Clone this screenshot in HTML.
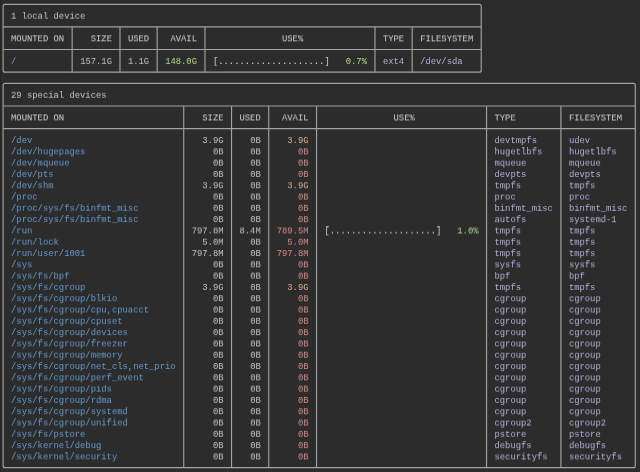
<!DOCTYPE html>
<html><head><meta charset="utf-8"><style>
html,body{margin:0;padding:0;width:640px;height:472px;overflow:hidden;background:#2c2c2c;}
body{position:relative;}
#w{position:absolute;left:0;top:0;width:640px;height:472px;will-change:transform;}
#e{position:absolute;left:0;top:0;width:1px;height:472px;background:#242424;}
svg{position:absolute;left:0;top:0;}
.r{position:absolute;left:0;width:640px;height:11px;will-change:transform;font-family:"Liberation Mono",monospace;font-size:8.853px;line-height:11px;}
.r span{position:absolute;top:0;white-space:pre;}
</style></head><body>
<div id="w"><div id="e"></div><svg width="640" height="472" fill="none" stroke="#a2a2a2" stroke-width="1.15"><path d="M5.096 4.350H479.230Q481.230 4.350 481.230 6.350V70.146Q481.230 72.146 479.230 72.146H5.096Q3.096 72.146 3.096 70.146V6.350Q3.096 4.350 5.096 4.350Z"/><line x1="3.096" y1="26.949" x2="481.230" y2="26.949"/><line x1="3.096" y1="49.548" x2="481.230" y2="49.548"/><line x1="72.160" y1="26.949" x2="72.160" y2="72.146"/><line x1="119.973" y1="26.949" x2="119.973" y2="72.146"/><line x1="157.162" y1="26.949" x2="157.162" y2="72.146"/><line x1="204.975" y1="26.949" x2="204.975" y2="72.146"/><line x1="374.978" y1="26.949" x2="374.978" y2="72.146"/><line x1="412.166" y1="26.949" x2="412.166" y2="72.146"/><path d="M5.096 83.446H633.296Q635.296 83.446 635.296 85.446V465.625Q635.296 467.625 633.296 467.625H5.096Q3.096 467.625 3.096 465.625V85.446Q3.096 83.446 5.096 83.446Z"/><line x1="3.096" y1="106.045" x2="635.296" y2="106.045"/><line x1="3.096" y1="128.643" x2="635.296" y2="128.643"/><line x1="183.725" y1="106.045" x2="183.725" y2="467.625"/><line x1="231.538" y1="106.045" x2="231.538" y2="467.625"/><line x1="268.726" y1="106.045" x2="268.726" y2="467.625"/><line x1="316.540" y1="106.045" x2="316.540" y2="467.625"/><line x1="486.543" y1="106.045" x2="486.543" y2="467.625"/><line x1="560.919" y1="106.045" x2="560.919" y2="467.625"/></svg>
<div class="r" style="top:11px;transform:translateY(0.759px) rotate(0.01deg)"><span style="left:11.065px;color:#c4c4c4">1 local device</span></div>
<div class="r" style="top:34px;transform:translateY(0.358px) rotate(0.01deg)"><span style="left:11.065px;color:#cfcfcf">MOUNTED ON</span><span style="left:90.754px;color:#cfcfcf">SIZE</span><span style="left:127.942px;color:#cfcfcf">USED</span><span style="left:170.443px;color:#cfcfcf">AVAIL</span><span style="left:282.008px;color:#cfcfcf">USE%</span><span style="left:382.947px;color:#cfcfcf">TYPE</span><span style="left:420.135px;color:#cfcfcf">FILESYSTEM</span></div>
<div class="r" style="top:56px;transform:translateY(0.957px) rotate(0.01deg)"><span style="left:11.065px;color:#6497cc">/</span><span style="left:80.129px;color:#c0c0c0">157.1G</span><span style="left:127.942px;color:#c0c0c0">1.1G</span><span style="left:165.131px;color:#afd787">148.0G</span><span style="left:212.944px;color:#c8cec0">[</span><span style="left:218.257px;color:#c8cec0;font-weight:bold">....................</span><span style="left:324.509px;color:#c8cec0">]</span><span style="left:345.759px;color:#afd787">0.7%</span><span style="left:382.947px;color:#afafd7">ext4</span><span style="left:420.135px;color:#afafd7">/dev/sda</span></div>
<div class="r" style="top:90px;transform:translateY(0.855px) rotate(0.01deg)"><span style="left:11.065px;color:#c4c4c4">29 special devices</span></div>
<div class="r" style="top:113px;transform:translateY(0.454px) rotate(0.01deg)"><span style="left:11.065px;color:#cfcfcf">MOUNTED ON</span><span style="left:202.319px;color:#cfcfcf">SIZE</span><span style="left:239.507px;color:#cfcfcf">USED</span><span style="left:282.008px;color:#cfcfcf">AVAIL</span><span style="left:393.572px;color:#cfcfcf">USE%</span><span style="left:494.512px;color:#cfcfcf">TYPE</span><span style="left:568.888px;color:#cfcfcf">FILESYSTEM</span></div>
<div class="r" style="top:136px;transform:translateY(0.053px) rotate(0.01deg)"><span style="left:11.065px;color:#6497cc">/dev</span><span style="left:202.319px;color:#c0c0c0">3.9G</span><span style="left:250.132px;color:#c0c0c0">0B</span><span style="left:287.320px;color:#d7af87">3.9G</span><span style="left:494.512px;color:#afafd7">devtmpfs</span><span style="left:568.888px;color:#afafd7">udev</span></div>
<div class="r" style="top:147px;transform:translateY(0.352px) rotate(0.01deg)"><span style="left:11.065px;color:#6497cc">/dev/hugepages</span><span style="left:212.944px;color:#c0c0c0">0B</span><span style="left:250.132px;color:#c0c0c0">0B</span><span style="left:297.946px;color:#d78787">0B</span><span style="left:494.512px;color:#afafd7">hugetlbfs</span><span style="left:568.888px;color:#afafd7">hugetlbfs</span></div>
<div class="r" style="top:158px;transform:translateY(0.652px) rotate(0.01deg)"><span style="left:11.065px;color:#6497cc">/dev/mqueue</span><span style="left:212.944px;color:#c0c0c0">0B</span><span style="left:250.132px;color:#c0c0c0">0B</span><span style="left:297.946px;color:#d78787">0B</span><span style="left:494.512px;color:#afafd7">mqueue</span><span style="left:568.888px;color:#afafd7">mqueue</span></div>
<div class="r" style="top:169px;transform:translateY(0.951px) rotate(0.01deg)"><span style="left:11.065px;color:#6497cc">/dev/pts</span><span style="left:212.944px;color:#c0c0c0">0B</span><span style="left:250.132px;color:#c0c0c0">0B</span><span style="left:297.946px;color:#d78787">0B</span><span style="left:494.512px;color:#afafd7">devpts</span><span style="left:568.888px;color:#afafd7">devpts</span></div>
<div class="r" style="top:181px;transform:translateY(0.250px) rotate(0.01deg)"><span style="left:11.065px;color:#6497cc">/dev/shm</span><span style="left:202.319px;color:#c0c0c0">3.9G</span><span style="left:250.132px;color:#c0c0c0">0B</span><span style="left:287.320px;color:#d7af87">3.9G</span><span style="left:494.512px;color:#afafd7">tmpfs</span><span style="left:568.888px;color:#afafd7">tmpfs</span></div>
<div class="r" style="top:192px;transform:translateY(0.550px) rotate(0.01deg)"><span style="left:11.065px;color:#6497cc">/proc</span><span style="left:212.944px;color:#c0c0c0">0B</span><span style="left:250.132px;color:#c0c0c0">0B</span><span style="left:297.946px;color:#d78787">0B</span><span style="left:494.512px;color:#afafd7">proc</span><span style="left:568.888px;color:#afafd7">proc</span></div>
<div class="r" style="top:203px;transform:translateY(0.849px) rotate(0.01deg)"><span style="left:11.065px;color:#6497cc">/proc/sys/fs/binfmt_misc</span><span style="left:212.944px;color:#c0c0c0">0B</span><span style="left:250.132px;color:#c0c0c0">0B</span><span style="left:297.946px;color:#d78787">0B</span><span style="left:494.512px;color:#afafd7">binfmt_misc</span><span style="left:568.888px;color:#afafd7">binfmt_misc</span></div>
<div class="r" style="top:215px;transform:translateY(0.149px) rotate(0.01deg)"><span style="left:11.065px;color:#6497cc">/proc/sys/fs/binfmt_misc</span><span style="left:212.944px;color:#c0c0c0">0B</span><span style="left:250.132px;color:#c0c0c0">0B</span><span style="left:297.946px;color:#d78787">0B</span><span style="left:494.512px;color:#afafd7">autofs</span><span style="left:568.888px;color:#afafd7">systemd-1</span></div>
<div class="r" style="top:226px;transform:translateY(0.448px) rotate(0.01deg)"><span style="left:11.065px;color:#6497cc">/run</span><span style="left:191.694px;color:#c0c0c0">797.8M</span><span style="left:239.507px;color:#c0c0c0">8.4M</span><span style="left:276.695px;color:#d78787">789.5M</span><span style="left:324.509px;color:#c8cec0">[</span><span style="left:329.821px;color:#c8cec0;font-weight:bold">....................</span><span style="left:436.073px;color:#c8cec0">]</span><span style="left:457.324px;color:#afd787">1.0%</span><span style="left:494.512px;color:#afafd7">tmpfs</span><span style="left:568.888px;color:#afafd7">tmpfs</span></div>
<div class="r" style="top:237px;transform:translateY(0.747px) rotate(0.01deg)"><span style="left:11.065px;color:#6497cc">/run/lock</span><span style="left:202.319px;color:#c0c0c0">5.0M</span><span style="left:250.132px;color:#c0c0c0">0B</span><span style="left:287.320px;color:#d78787">5.0M</span><span style="left:494.512px;color:#afafd7">tmpfs</span><span style="left:568.888px;color:#afafd7">tmpfs</span></div>
<div class="r" style="top:249px;transform:translateY(0.047px) rotate(0.01deg)"><span style="left:11.065px;color:#6497cc">/run/user/1001</span><span style="left:191.694px;color:#c0c0c0">797.8M</span><span style="left:250.132px;color:#c0c0c0">0B</span><span style="left:276.695px;color:#d78787">797.8M</span><span style="left:494.512px;color:#afafd7">tmpfs</span><span style="left:568.888px;color:#afafd7">tmpfs</span></div>
<div class="r" style="top:260px;transform:translateY(0.346px) rotate(0.01deg)"><span style="left:11.065px;color:#6497cc">/sys</span><span style="left:212.944px;color:#c0c0c0">0B</span><span style="left:250.132px;color:#c0c0c0">0B</span><span style="left:297.946px;color:#d78787">0B</span><span style="left:494.512px;color:#afafd7">sysfs</span><span style="left:568.888px;color:#afafd7">sysfs</span></div>
<div class="r" style="top:271px;transform:translateY(0.646px) rotate(0.01deg)"><span style="left:11.065px;color:#6497cc">/sys/fs/bpf</span><span style="left:212.944px;color:#c0c0c0">0B</span><span style="left:250.132px;color:#c0c0c0">0B</span><span style="left:297.946px;color:#d78787">0B</span><span style="left:494.512px;color:#afafd7">bpf</span><span style="left:568.888px;color:#afafd7">bpf</span></div>
<div class="r" style="top:282px;transform:translateY(0.945px) rotate(0.01deg)"><span style="left:11.065px;color:#6497cc">/sys/fs/cgroup</span><span style="left:202.319px;color:#c0c0c0">3.9G</span><span style="left:250.132px;color:#c0c0c0">0B</span><span style="left:287.320px;color:#d7af87">3.9G</span><span style="left:494.512px;color:#afafd7">tmpfs</span><span style="left:568.888px;color:#afafd7">tmpfs</span></div>
<div class="r" style="top:294px;transform:translateY(0.244px) rotate(0.01deg)"><span style="left:11.065px;color:#6497cc">/sys/fs/cgroup/blkio</span><span style="left:212.944px;color:#c0c0c0">0B</span><span style="left:250.132px;color:#c0c0c0">0B</span><span style="left:297.946px;color:#d78787">0B</span><span style="left:494.512px;color:#afafd7">cgroup</span><span style="left:568.888px;color:#afafd7">cgroup</span></div>
<div class="r" style="top:305px;transform:translateY(0.544px) rotate(0.01deg)"><span style="left:11.065px;color:#6497cc">/sys/fs/cgroup/cpu,cpuacct</span><span style="left:212.944px;color:#c0c0c0">0B</span><span style="left:250.132px;color:#c0c0c0">0B</span><span style="left:297.946px;color:#d78787">0B</span><span style="left:494.512px;color:#afafd7">cgroup</span><span style="left:568.888px;color:#afafd7">cgroup</span></div>
<div class="r" style="top:316px;transform:translateY(0.843px) rotate(0.01deg)"><span style="left:11.065px;color:#6497cc">/sys/fs/cgroup/cpuset</span><span style="left:212.944px;color:#c0c0c0">0B</span><span style="left:250.132px;color:#c0c0c0">0B</span><span style="left:297.946px;color:#d78787">0B</span><span style="left:494.512px;color:#afafd7">cgroup</span><span style="left:568.888px;color:#afafd7">cgroup</span></div>
<div class="r" style="top:328px;transform:translateY(0.143px) rotate(0.01deg)"><span style="left:11.065px;color:#6497cc">/sys/fs/cgroup/devices</span><span style="left:212.944px;color:#c0c0c0">0B</span><span style="left:250.132px;color:#c0c0c0">0B</span><span style="left:297.946px;color:#d78787">0B</span><span style="left:494.512px;color:#afafd7">cgroup</span><span style="left:568.888px;color:#afafd7">cgroup</span></div>
<div class="r" style="top:339px;transform:translateY(0.442px) rotate(0.01deg)"><span style="left:11.065px;color:#6497cc">/sys/fs/cgroup/freezer</span><span style="left:212.944px;color:#c0c0c0">0B</span><span style="left:250.132px;color:#c0c0c0">0B</span><span style="left:297.946px;color:#d78787">0B</span><span style="left:494.512px;color:#afafd7">cgroup</span><span style="left:568.888px;color:#afafd7">cgroup</span></div>
<div class="r" style="top:350px;transform:translateY(0.741px) rotate(0.01deg)"><span style="left:11.065px;color:#6497cc">/sys/fs/cgroup/memory</span><span style="left:212.944px;color:#c0c0c0">0B</span><span style="left:250.132px;color:#c0c0c0">0B</span><span style="left:297.946px;color:#d78787">0B</span><span style="left:494.512px;color:#afafd7">cgroup</span><span style="left:568.888px;color:#afafd7">cgroup</span></div>
<div class="r" style="top:362px;transform:translateY(0.041px) rotate(0.01deg)"><span style="left:11.065px;color:#6497cc">/sys/fs/cgroup/net_cls,net_prio</span><span style="left:212.944px;color:#c0c0c0">0B</span><span style="left:250.132px;color:#c0c0c0">0B</span><span style="left:297.946px;color:#d78787">0B</span><span style="left:494.512px;color:#afafd7">cgroup</span><span style="left:568.888px;color:#afafd7">cgroup</span></div>
<div class="r" style="top:373px;transform:translateY(0.340px) rotate(0.01deg)"><span style="left:11.065px;color:#6497cc">/sys/fs/cgroup/perf_event</span><span style="left:212.944px;color:#c0c0c0">0B</span><span style="left:250.132px;color:#c0c0c0">0B</span><span style="left:297.946px;color:#d78787">0B</span><span style="left:494.512px;color:#afafd7">cgroup</span><span style="left:568.888px;color:#afafd7">cgroup</span></div>
<div class="r" style="top:384px;transform:translateY(0.640px) rotate(0.01deg)"><span style="left:11.065px;color:#6497cc">/sys/fs/cgroup/pids</span><span style="left:212.944px;color:#c0c0c0">0B</span><span style="left:250.132px;color:#c0c0c0">0B</span><span style="left:297.946px;color:#d78787">0B</span><span style="left:494.512px;color:#afafd7">cgroup</span><span style="left:568.888px;color:#afafd7">cgroup</span></div>
<div class="r" style="top:395px;transform:translateY(0.939px) rotate(0.01deg)"><span style="left:11.065px;color:#6497cc">/sys/fs/cgroup/rdma</span><span style="left:212.944px;color:#c0c0c0">0B</span><span style="left:250.132px;color:#c0c0c0">0B</span><span style="left:297.946px;color:#d78787">0B</span><span style="left:494.512px;color:#afafd7">cgroup</span><span style="left:568.888px;color:#afafd7">cgroup</span></div>
<div class="r" style="top:407px;transform:translateY(0.238px) rotate(0.01deg)"><span style="left:11.065px;color:#6497cc">/sys/fs/cgroup/systemd</span><span style="left:212.944px;color:#c0c0c0">0B</span><span style="left:250.132px;color:#c0c0c0">0B</span><span style="left:297.946px;color:#d78787">0B</span><span style="left:494.512px;color:#afafd7">cgroup</span><span style="left:568.888px;color:#afafd7">cgroup</span></div>
<div class="r" style="top:418px;transform:translateY(0.538px) rotate(0.01deg)"><span style="left:11.065px;color:#6497cc">/sys/fs/cgroup/unified</span><span style="left:212.944px;color:#c0c0c0">0B</span><span style="left:250.132px;color:#c0c0c0">0B</span><span style="left:297.946px;color:#d78787">0B</span><span style="left:494.512px;color:#afafd7">cgroup2</span><span style="left:568.888px;color:#afafd7">cgroup2</span></div>
<div class="r" style="top:429px;transform:translateY(0.837px) rotate(0.01deg)"><span style="left:11.065px;color:#6497cc">/sys/fs/pstore</span><span style="left:212.944px;color:#c0c0c0">0B</span><span style="left:250.132px;color:#c0c0c0">0B</span><span style="left:297.946px;color:#d78787">0B</span><span style="left:494.512px;color:#afafd7">pstore</span><span style="left:568.888px;color:#afafd7">pstore</span></div>
<div class="r" style="top:441px;transform:translateY(0.137px) rotate(0.01deg)"><span style="left:11.065px;color:#6497cc">/sys/kernel/debug</span><span style="left:212.944px;color:#c0c0c0">0B</span><span style="left:250.132px;color:#c0c0c0">0B</span><span style="left:297.946px;color:#d78787">0B</span><span style="left:494.512px;color:#afafd7">debugfs</span><span style="left:568.888px;color:#afafd7">debugfs</span></div>
<div class="r" style="top:452px;transform:translateY(0.436px) rotate(0.01deg)"><span style="left:11.065px;color:#6497cc">/sys/kernel/security</span><span style="left:212.944px;color:#c0c0c0">0B</span><span style="left:250.132px;color:#c0c0c0">0B</span><span style="left:297.946px;color:#d78787">0B</span><span style="left:494.512px;color:#afafd7">securityfs</span><span style="left:568.888px;color:#afafd7">securityfs</span></div>
</div>
</body></html>
